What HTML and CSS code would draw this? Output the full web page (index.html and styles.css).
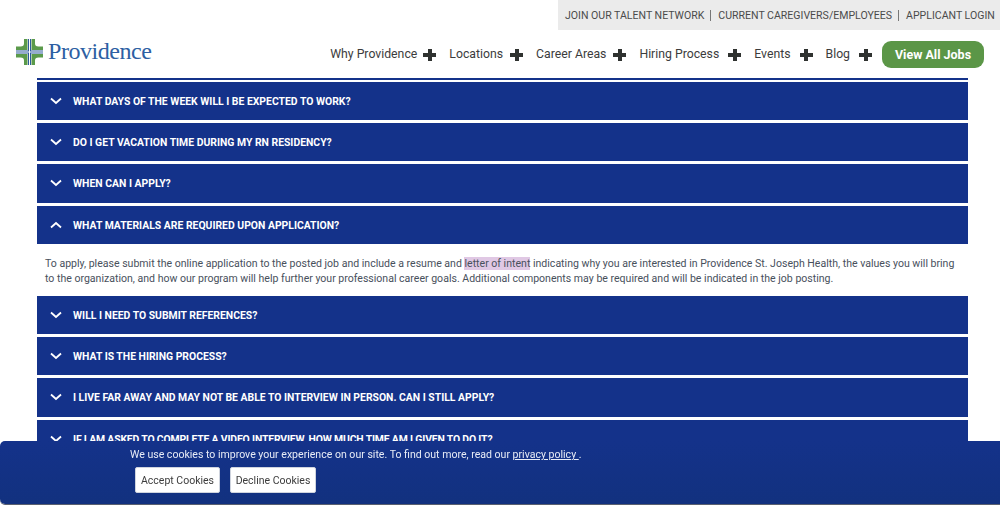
FILE: index.html
```html
<!DOCTYPE html>
<html lang="en">
<head>
<meta charset="utf-8">
<title>Providence Careers</title>
<link rel="stylesheet" href="styles.css">
</head>
<body>
<div class="utility">
  <nav class="utility-nav">
    <a>JOIN OUR TALENT NETWORK</a><span class="sep"></span>
    <a>CURRENT CAREGIVERS/EMPLOYEES</a><span class="sep"></span>
    <a>APPLICANT LOGIN</a>
  </nav>
</div>
<header class="header">
  <a class="logo">
    <svg class="logo-mark" width="27" height="26" viewBox="0 0 27 26">
      <path class="g" d="M8 0h3.500v11H0V7.500h4.500C7 7.500 8 6.500 8 4.500z"/>
      <path class="g" d="M19 0h-3.500v11H27V7.500h-4.500C20 7.500 19 6.500 19 4.500z"/>
      <path class="g" d="M8 26h3.500V15H0v3.500h4.500C7 18.500 8 19.500 8 21.500z"/>
      <path class="g" d="M19 26h-3.500V15H27v3.500h-4.500c-2.500 0-3.500 1-3.500 3z"/>
      <path class="b" d="M12 0h1v12.500H0v-1h12zM14 0h1v11.500h12v1H14zM0 13.500h13V26h-1V14.500H0zM14 13.500h13v1H15V26h-1z"/>
    </svg>
    <span class="logo-text">Providence</span>
  </a>
  <nav class="main-nav">
    <a class="nav-item">Why Providence<span class="plus plus-a"></span></a>
    <a class="nav-item">Locations<span class="plus plus-b"></span></a>
    <a class="nav-item">Career Areas<span class="plus plus-b"></span></a>
    <a class="nav-item">Hiring Process<span class="plus plus-c"></span></a>
    <a class="nav-item">Events<span class="plus plus-c"></span></a>
    <a class="nav-item">Blog<span class="plus plus-c"></span></a>
    <a class="jobs-btn">View All Jobs</a>
  </nav>
</header>
<main class="faq">
  <div class="acc"><svg class="chev" viewBox="0 0 12 8"><path d="M1 1.500l5 4.500 5-4.500"/></svg>WHAT DAYS OF THE WEEK WILL I BE EXPECTED TO WORK?</div>
  <div class="acc"><svg class="chev" viewBox="0 0 12 8"><path d="M1 1.500l5 4.500 5-4.500"/></svg>DO I GET VACATION TIME DURING MY RN RESIDENCY?</div>
  <div class="acc"><svg class="chev" viewBox="0 0 12 8"><path d="M1 1.500l5 4.500 5-4.500"/></svg>WHEN CAN I APPLY?</div>
  <div class="acc open"><svg class="chev" viewBox="0 0 12 8"><path d="M1 6.500l5-4.500 5 4.500"/></svg>WHAT MATERIALS ARE REQUIRED UPON APPLICATION?</div>
  <div class="acc-body">To apply, please submit the online application to the posted job and include a resume and <mark class="hl">letter of intent</mark> indicating why you are interested in Providence St. Joseph Health, the values you will bring to the organization, and how our program will help further your professional career goals. Additional components may be required and will be indicated in the job posting.</div>
  <div class="acc"><svg class="chev" viewBox="0 0 12 8"><path d="M1 1.500l5 4.500 5-4.500"/></svg>WILL I NEED TO SUBMIT REFERENCES?</div>
  <div class="acc"><svg class="chev" viewBox="0 0 12 8"><path d="M1 1.500l5 4.500 5-4.500"/></svg>WHAT IS THE HIRING PROCESS?</div>
  <div class="acc"><svg class="chev" viewBox="0 0 12 8"><path d="M1 1.500l5 4.500 5-4.500"/></svg>I LIVE FAR AWAY AND MAY NOT BE ABLE TO INTERVIEW IN PERSON. CAN I STILL APPLY?</div>
  <div class="acc tight"><svg class="chev" viewBox="0 0 12 8"><path d="M1 1.500l5 4.500 5-4.500"/></svg>IF I AM ASKED TO COMPLETE A VIDEO INTERVIEW, HOW MUCH TIME AM I GIVEN TO DO IT?</div>
</main>
<aside class="cookie">
  <p class="cookie-text">We use cookies to improve your experience on our site. To find out more, read our <a class="cookie-link">privacy policy </a>.</p>
  <div class="cookie-actions">
    <button class="cookie-btn">Accept Cookies</button>
    <button class="cookie-btn">Decline Cookies</button>
  </div>
</aside>
</body>
</html>
```
FILE: styles.css
```css
* { box-sizing: border-box; }
html, body { height: 505px; overflow: hidden; }
body {
  margin: 0;
  background: #fff;
  color: #3f4650;
  font-family: Roboto, "Liberation Sans", sans-serif;
}
.utility { display: flex; justify-content: flex-end; height: 30px; }
.utility-nav {
  display: flex;
  align-items: center;
  width: 442px;
  padding-left: 7px;
  background: #ebebeb;
  color: #4a4a4a;
  font-size: 10.550px;
  white-space: nowrap;
}
.sep { width: 1px; height: 11px; margin: 0 7px 0 6px; background: #777; }
.header {
  display: flex;
  align-items: center;
  justify-content: space-between;
  height: 48px;
  padding: 0 16px;
}
.logo { display: flex; align-items: center; gap: 5px; margin-top: -4px; }
.logo-mark { display: block; }
.g { fill: #5b9a4b; }
.b { fill: #2d5a9e; }
.logo-text {
  position: relative;
  top: -1px;
  font-family: "Liberation Serif", serif;
  font-size: 24.100px;
  letter-spacing: -0.5px;
  color: #2d5fa3;
}
.main-nav { display: flex; align-items: center; }
.nav-item {
  display: flex;
  align-items: center;
  margin-right: 13px;
  color: #3c3c3c;
  font-size: 12.250px;
  white-space: nowrap;
}
.plus {
  width: 13px;
  height: 12px;
  margin-top: 1px;
  border-radius: 1px;
  background:
    linear-gradient(#2f3230, #2f3230) center / 13px 4px no-repeat,
    linear-gradient(#2f3230, #2f3230) center / 4px 12px no-repeat;
}
.plus-a { margin-left: 6px; }
.plus-b { margin-left: 7px; }
.plus-c { margin-left: 9px; }
.jobs-btn {
  display: flex;
  align-items: center;
  justify-content: center;
  width: 102px;
  height: 27px;
  margin-left: -3px;
  border-radius: 9px;
  background: #5b9647;
  color: #fff;
  font-size: 12.500px;
  font-weight: 700;
}
.faq {
  display: flex;
  flex-direction: column;
  margin: 0 32px 0 37px;
  padding-top: 2px;
  border-top: 2px solid #14328a;
}
.acc {
  display: flex;
  align-items: center;
  flex: none;
  height: 38.200px;
  margin-bottom: 3px;
  padding: 1px 0 0 13px;
  background: #14328a;
  color: #fff;
  font-size: 10.400px;
  font-weight: 700;
}
.acc.open { margin-bottom: 0; }
.acc.tight { letter-spacing: -0.16px; }
.chev {
  flex: none;
  width: 12px;
  height: 8px;
  margin: -1px 11px 0 0;
  fill: none;
  stroke: #fff;
  stroke-width: 1.800;
}
.acc-body {
  flex: none;
  height: 52.200px;
  padding: 12px 8px 0;
  color: #48505c;
  font-size: 10.550px;
  line-height: 15.500px;
}
.hl { background: #e0c8e4; color: inherit; }
.cookie {
  position: fixed;
  left: 0;
  right: 0;
  top: 441px;
  height: 63px;
  padding: 7px 0 0 130px;
  border-radius: 5px 0 0 5px;
  background: linear-gradient(#14328a, #12317f);
  box-shadow: 0 1px 0 #5a6070;
  color: #e8ecf6;
  font-size: 10.550px;
}
.cookie-text { margin: 0; line-height: 14px; }
.cookie-link { color: inherit; text-decoration: underline; }
.cookie-actions { display: flex; gap: 10px; margin: 5px 0 0 5px; }
.cookie-btn {
  width: 85px;
  height: 26px;
  padding: 0;
  border: 1px solid #cfd4de;
  border-radius: 2px;
  background: #fff;
  color: #3c3c3c;
  font: 10.500px Roboto, sans-serif;
}
.cookie-btn + .cookie-btn { width: 86px; }
```
